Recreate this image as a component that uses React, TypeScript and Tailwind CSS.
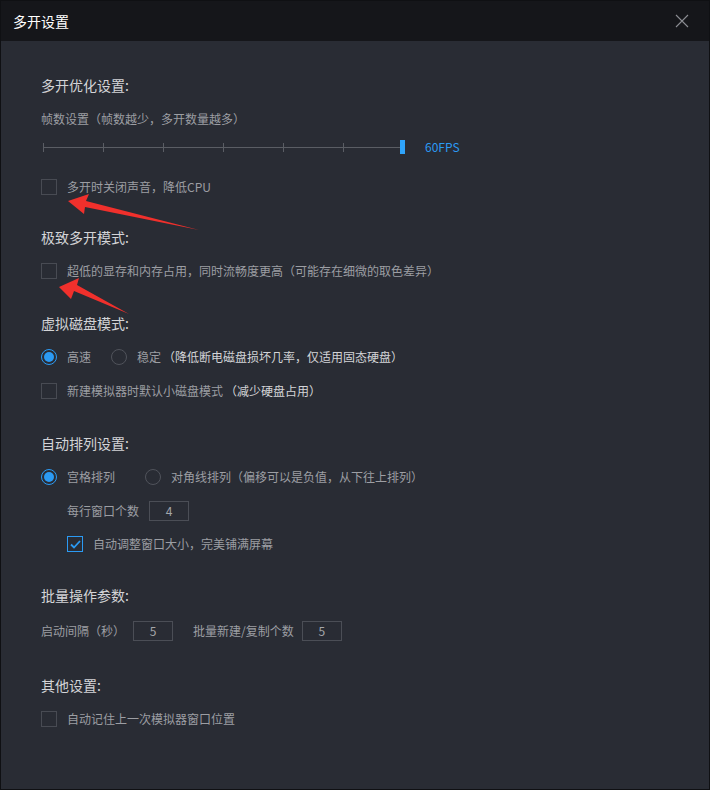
import React from "react";

const font = { fontFamily: '"Microsoft YaHei", "Noto Sans CJK SC", "Noto Sans", sans-serif' };

const Box = ({ checked = false }: { checked?: boolean }) => (
  <span
    className={
      "flex size-[16px] shrink-0 items-center justify-center border " +
      (checked ? "border-[#2b9af3]" : "border-[#484b53]")
    }
  >
    {checked && (
      <svg width="11" height="9" viewBox="0 0 11 9" fill="none">
        <path d="M1 4.5 L4 7.5 L10 1" stroke="#2b9af3" strokeWidth="1.8" />
      </svg>
    )}
  </span>
);

const Radio = ({ on = false }: { on?: boolean }) => (
  <span
    className={
      "flex size-[16px] shrink-0 items-center justify-center rounded-full border-[1.5px] " +
      (on ? "border-[#2b9af3]" : "border-[#50535b]")
    }
  >
    {on && <span className="size-[10px] rounded-full bg-[#2b9af3]" />}
  </span>
);

const Heading = ({ children, mt }: { children: React.ReactNode; mt: string }) => (
  <div className={"h-[20px] text-[14px] leading-[20px] text-[#d3d4d7] " + mt}>{children}</div>
);

const Check = ({ label, extra, mt, checked }: { label: string; extra?: string; mt: string; checked?: boolean }) => (
  <div className={"flex h-[20px] items-center text-[12px] text-[#9c9ea3] " + mt}>
    <Box checked={checked} />
    <span className="ml-[10px]">{label}</span>
    {extra && <span className="ml-[2px] text-[#d3d4d7]">{extra}</span>}
  </div>
);

const Num = ({ v }: { v: string }) => (
  <span className="flex h-[20px] w-[40px] items-center justify-center border border-[#4b4e56] text-[12px] text-[#a4a6aa]">
    {v}
  </span>
);

export default function App() {
  return (
    <div style={font} className="relative h-[790px] w-[710px] overflow-hidden border border-[#0f1013] bg-[#292c34]">
      <div className="flex h-[40px] items-center justify-between bg-[#15161a] pl-[12px] pr-[20px]">
        <span className="text-[14px] text-white">多开设置</span>
        <svg width="14" height="14" viewBox="0 0 14 14">
          <path d="M1 1 L13 13 M13 1 L1 13" stroke="#8c8e93" strokeWidth="1.1" />
        </svg>
      </div>

      <div className="pl-[40px]">
        <Heading mt="mt-[34px]">多开优化设置:</Heading>
        <div className="mt-[15px] h-[18px] text-[12px] leading-[18px] text-[#9c9ea3]">帧数设置（帧数越少，多开数量越多）</div>

        <div className="mt-[9px] flex h-[20px] items-center">
          <div className="relative h-[20px] w-[365px]">
            <div className="absolute left-[2px] right-[5px] top-[10px] h-px bg-[#5a5d64]" />
            {[0, 60, 120, 180, 240, 300].map((x) => (
              <div key={x} className="absolute top-[6px] h-[9px] w-px bg-[#5a5d64]" style={{ left: x + 2 }} />
            ))}
            <div className="absolute left-[359px] top-[3px] h-[14px] w-[5px] bg-[#2fa4fb]" />
          </div>
          <span className="ml-[19px] text-[12px] text-[#2b9af3]">60FPS</span>
        </div>

        <Check mt="mt-[20px]" label="多开时关闭声音，降低CPU" />

        <Heading mt="mt-[30px]">极致多开模式:</Heading>
        <Check mt="mt-[14px]" label="超低的显存和内存占用，同时流畅度更高（可能存在细微的取色差异）" />

        <Heading mt="mt-[32px]">虚拟磁盘模式:</Heading>
        <div className="mt-[14px] flex h-[20px] items-center text-[12px] text-[#9c9ea3]">
          <Radio on />
          <span className="ml-[10px]">高速</span>
          <span className="ml-[20px]"><Radio /></span>
          <span className="ml-[10px]">稳定</span>
          <span className="ml-[2px] text-[#d3d4d7]">（降低断电磁盘损坏几率，仅适用固态硬盘）</span>
        </div>
        <Check mt="mt-[14px]" label="新建模拟器时默认小磁盘模式" extra="（减少硬盘占用）" />

        <Heading mt="mt-[32px]">自动排列设置:</Heading>
        <div className="mt-[14px] flex h-[20px] items-center text-[12px] text-[#9c9ea3]">
          <Radio on />
          <span className="ml-[10px]">宫格排列</span>
          <span className="ml-[30px]"><Radio /></span>
          <span className="ml-[10px]">对角线排列（偏移可以是负值，从下往上排列）</span>
        </div>
        <div className="ml-[26px] mt-[14px] flex h-[20px] items-center gap-[10px] text-[12px] text-[#9c9ea3]">
          <span>每行窗口个数</span>
          <Num v="4" />
        </div>
        <div className="ml-[26px]">
          <Check mt="mt-[13px]" checked label="自动调整窗口大小，完美铺满屏幕" />
        </div>

        <Heading mt="mt-[31px]">批量操作参数:</Heading>
        <div className="mt-[16px] flex h-[20px] items-center text-[12px] text-[#9c9ea3]">
          <span>启动间隔（秒）</span>
          <span className="ml-[8px]"><Num v="5" /></span>
          <span className="ml-[20px]">批量新建/复制个数</span>
          <span className="ml-[8px]"><Num v="5" /></span>
        </div>

        <Heading mt="mt-[34px]">其他设置:</Heading>
        <Check mt="mt-[14px]" label="自动记住上一次模拟器窗口位置" />
      </div>

      <svg className="pointer-events-none absolute left-0 top-0" width="710" height="790">
        <polygon points="67,200 88,193 85,200 198,229 84,206 83,213" fill="#f0302c" />
        <polygon points="58,286 78,277 76,284 128,313 73,290 70,298" fill="#f0302c" />
      </svg>
    </div>
  );
}
